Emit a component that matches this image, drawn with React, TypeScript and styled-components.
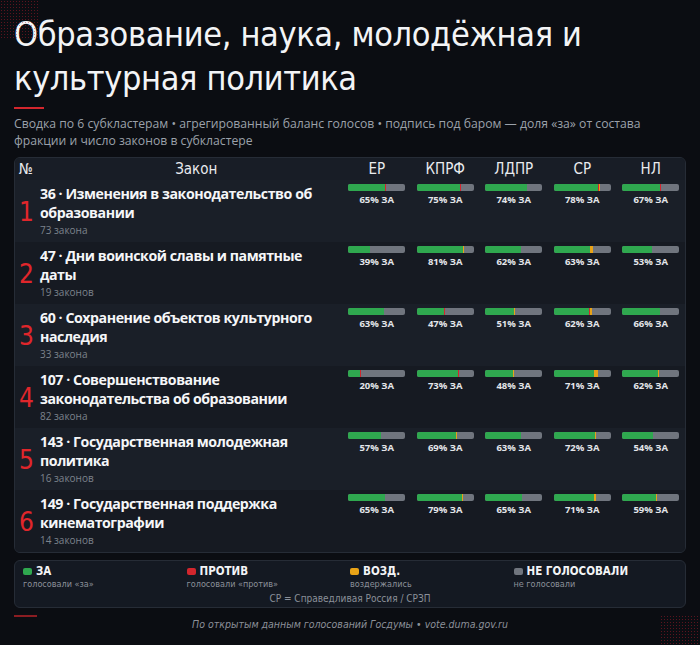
import React from "react";
import styled, { createGlobalStyle } from "styled-components";

const GlobalStyle = createGlobalStyle`
  html, body { margin: 0; padding: 0; background: #0b0d12; }
  * { box-sizing: border-box; }
`;

const COND = `"Liberation Sans Narrow", "DejaVu Sans Condensed", "Liberation Sans", sans-serif`;
const SANS = `"Open Sans", "Noto Sans", sans-serif`;

type Cell = { za: number; pr: number; vz: number };
type Row = { n: number; title: string; count: string; cells: Cell[] };

const rows: Row[] = [
  { n: 1, title: "36 · Изменения в законодательство об образовании", count: "73 закона",
    cells: [{ za: 65, pr: 1, vz: 0 }, { za: 75, pr: 3, vz: 0 }, { za: 74, pr: 0, vz: 0 }, { za: 78, pr: 1, vz: 2 }, { za: 67, pr: 1, vz: 0 }] },
  { n: 2, title: "47 · Дни воинской славы и памятные даты", count: "19 законов",
    cells: [{ za: 39, pr: 0, vz: 0 }, { za: 81, pr: 0, vz: 0.7 }, { za: 62, pr: 0, vz: 0 }, { za: 63, pr: 0, vz: 5 }, { za: 53, pr: 0, vz: 0 }] },
  { n: 3, title: "60 · Сохранение объектов культурного наследия", count: "33 закона",
    cells: [{ za: 63, pr: 0, vz: 0 }, { za: 47, pr: 2, vz: 0 }, { za: 51, pr: 0, vz: 0.7 }, { za: 62, pr: 2, vz: 4 }, { za: 66, pr: 0, vz: 0 }] },
  { n: 4, title: "107 · Совершенствование законодательства об образовании", count: "82 закона",
    cells: [{ za: 20, pr: 1.5, vz: 0 }, { za: 73, pr: 2, vz: 0 }, { za: 48, pr: 0, vz: 1 }, { za: 71, pr: 0, vz: 6 }, { za: 62, pr: 0, vz: 1 }] },
  { n: 5, title: "143 · Государственная молодежная политика", count: "16 законов",
    cells: [{ za: 57, pr: 0, vz: 0 }, { za: 69, pr: 0, vz: 0.7 }, { za: 63, pr: 0, vz: 0 }, { za: 72, pr: 0, vz: 0.7 }, { za: 54, pr: 0, vz: 0 }] },
  { n: 6, title: "149 · Государственная поддержка кинематографии", count: "14 законов",
    cells: [{ za: 65, pr: 0, vz: 0 }, { za: 79, pr: 0, vz: 0.7 }, { za: 65, pr: 0, vz: 0 }, { za: 71, pr: 0, vz: 4 }, { za: 59, pr: 0, vz: 0.7 }] },
];

const parties = ["ЕР", "КПРФ", "ЛДПР", "СР", "НЛ"];

const legend = [
  { color: "#2fa84f", label: "ЗА", sub: "голосовали «за»" },
  { color: "#d3262d", label: "ПРОТИВ", sub: "голосовали «против»" },
  { color: "#e8a317", label: "ВОЗД.", sub: "воздержались" },
  { color: "#70757e", label: "НЕ ГОЛОСОВАЛИ", sub: "не голосовали" },
];

const Page = styled.div`
  position: relative;
  width: 700px;
  height: 645px;
  overflow: hidden;
  background: #0b0d12;
  padding: 12px 14px 0 14px;
`;

const Dots = styled.div<{ $corner: "tl" | "br" }>`
  position: absolute;
  width: 40px;
  height: ${(p) => (p.$corner === "tl" ? "40px" : "30px")};
  ${(p) => (p.$corner === "tl" ? "top: 0; left: 0;" : "bottom: 0; right: 0;")}
  background-image: radial-gradient(rgba(190, 30, 45, 0.45) 0.7px, transparent 1px);
  background-size: 3px 3px;
  pointer-events: none;
`;

const Title = styled.h1`
  margin: 0;
  font-family: ${COND};
  font-weight: 400;
  font-size: 34px;
  letter-spacing: -0.35px;
  line-height: 44px;
  color: #f3f4f6;
`;

const Accent = styled.div<{ $w: number; $c: string }>`
  width: ${(p) => p.$w}px;
  height: 2px;
  background: ${(p) => p.$c};
`;

const Subtitle = styled.p`
  margin: 6px 0 0 0;
  font-family: ${SANS};
  font-size: 12.2px;
  line-height: 17px;
  color: #9ba1aa;
`;

const Table = styled.div`
  margin-top: 8px;
  border: 1px solid #262c36;
  border-radius: 6px;
  overflow: hidden;
  background: #151a22;
`;

const Grid = styled.div<{ $alt?: boolean; $head?: boolean }>`
  display: grid;
  grid-template-columns: 25px 1fr repeat(5, 68.5px);
  height: ${(p) => (p.$head ? "22px" : "62px")};
  background: ${(p) => (p.$head ? "#181d26" : p.$alt ? "#161a22" : "#1a1f28")};
`;

const HeadCell = styled.div<{ $align?: string; $shift?: number }>`
  font-family: ${COND};
  font-size: 15px;
  color: #e9ebee;
  display: flex;
  align-items: center;
  justify-content: ${(p) => p.$align || "center"};
  padding-left: ${(p) => (p.$align === "flex-start" ? "4px" : `${p.$shift || 0}px`)};
`;

const Num = styled.div`
  font-family: ${COND};
  font-size: 26px;
  color: #e0262b;
  display: flex;
  align-items: center;
  padding-left: 4px;
  padding-top: 2px;
`;

const Law = styled.div`
  padding-top: 4px;
  padding-right: 4px;
`;

const LawTitle = styled.div`
  font-family: ${SANS};
  font-weight: 700;
  font-size: 14.2px;
  letter-spacing: -0.45px;
  line-height: 19px;
  color: #f5f6f8;
`;

const LawCount = styled.div`
  font-family: ${SANS};
  font-size: 10px;
  line-height: 14px;
  margin-top: 1px;
  color: #7d838c;
`;

const BarCell = styled.div`
  padding-top: 4px;
  display: flex;
  flex-direction: column;
  align-items: center;
`;

const Bar = styled.div`
  width: 57px;
  height: 7px;
  border-radius: 2px;
  overflow: hidden;
  display: flex;
  background: #70757e;
`;

const Seg = styled.div<{ $c: string }>`
  height: 100%;
  background: ${(p) => p.$c};
`;

const BarLabel = styled.div`
  margin-top: 2px;
  font-family: ${SANS};
  font-weight: 700;
  font-size: 9.5px;
  line-height: 13px;
  color: #e4e6ea;
`;

const Legend = styled.div`
  margin-top: 7px;
  border: 1px solid #262c36;
  border-radius: 6px;
  background: #141922;
  padding: 4px 8px 2px 8px;
  display: grid;
  grid-template-columns: repeat(4, 1fr);
`;

const LegendItem = styled.div`
  display: flex;
  flex-direction: column;
`;

const LegendHead = styled.div`
  display: flex;
  align-items: center;
  gap: 4px;
  font-family: ${COND};
  font-weight: 700;
  font-size: 11.5px;
  line-height: 13px;
  color: #f3f4f6;
`;

const Swatch = styled.span<{ $c: string }>`
  width: 9px;
  height: 7px;
  border-radius: 2px;
  background: ${(p) => p.$c};
`;

const LegendSub = styled.div`
  font-family: ${COND};
  font-size: 9px;
  line-height: 12px;
  color: #8b9099;
`;

const LegendNote = styled.div`
  grid-column: 1 / -1;
  margin-top: 2px;
  text-align: center;
  font-family: ${COND};
  font-size: 10px;
  line-height: 13px;
  color: #8b9099;
`;

const Footer = styled.div`
  margin-top: 0;
  text-align: center;
  font-family: ${COND};
  font-style: italic;
  font-size: 10.5px;
  line-height: 14px;
  color: #8b9099;
`;

const AccentWrap = styled.div<{ $mt: number }>`
  margin-top: ${(p) => p.$mt}px;
`;

function VoteBar({ c }: { c: Cell }) {
  return (
    <BarCell>
      <Bar>
        <Seg $c="#2fa84f" style={{ width: `${c.za}%` }} />
        {c.pr > 0 && <Seg $c="#d3262d" style={{ width: `${c.pr}%` }} />}
        {c.vz > 0 && <Seg $c="#e8a317" style={{ width: `${c.vz}%` }} />}
      </Bar>
      <BarLabel>{c.za}% ЗА</BarLabel>
    </BarCell>
  );
}

export default function App() {
  return (
    <>
      <GlobalStyle />
      <Page>
        <Dots $corner="tl" />
        <Dots $corner="br" />
        <Title>Образование, наука, молодёжная и культурная политика</Title>
        <AccentWrap $mt={7}>
          <Accent $w={30} $c="#d3262d" />
        </AccentWrap>
        <Subtitle>
          Сводка по 6 субкластерам • агрегированный баланс голосов • подпись под баром — доля «за» от состава
          фракции и число законов в субкластере
        </Subtitle>
        <Table>
          <Grid $head>
            <HeadCell $align="flex-start">№</HeadCell>
            <HeadCell $shift={10}>Закон</HeadCell>
            {parties.map((p) => (
              <HeadCell key={p}>{p}</HeadCell>
            ))}
          </Grid>
          {rows.map((r, i) => (
            <Grid key={r.n} $alt={i % 2 === 1}>
              <Num>{r.n}</Num>
              <Law>
                <LawTitle>{r.title}</LawTitle>
                <LawCount>{r.count}</LawCount>
              </Law>
              {r.cells.map((c, j) => (
                <VoteBar key={j} c={c} />
              ))}
            </Grid>
          ))}
        </Table>
        <Legend>
          {legend.map((l) => (
            <LegendItem key={l.label}>
              <LegendHead>
                <Swatch $c={l.color} />
                {l.label}
              </LegendHead>
              <LegendSub>{l.sub}</LegendSub>
            </LegendItem>
          ))}
          <LegendNote>СР = Справедливая Россия / СРЗП</LegendNote>
        </Legend>
        <AccentWrap $mt={7}>
          <Accent $w={23} $c="#8b1d22" />
        </AccentWrap>
        <Footer>По открытым данным голосований Госдумы • vote.duma.gov.ru</Footer>
      </Page>
    </>
  );
}
